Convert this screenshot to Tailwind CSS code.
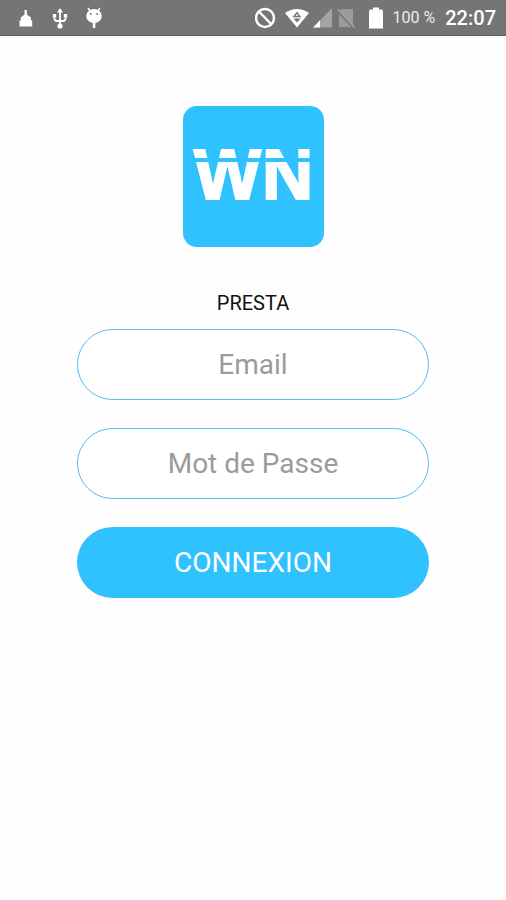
<!DOCTYPE html>
<html lang="fr">
<head>
<meta charset="utf-8">
<meta name="viewport" content="width=device-width, initial-scale=1">
<title>Presta – Connexion</title>
<script src="https://cdn.jsdelivr.net/npm/@tailwindcss/browser@4"></script>
</head>
<body class="min-h-screen bg-[#fefefe] font-['Roboto',sans-serif]">
<header class="flex h-9 items-center justify-between border-b border-[#5c5c5c] bg-[#757575] pr-[10px] pl-[18px] text-white">
  <div class="flex items-center gap-[18px]">
    <svg class="h-6 w-4" viewBox="0 0 16 24" fill="#fff" aria-hidden="true"><path d="M6.500 4h2.400v4.500l4 3v3h1.300v6H1.500v-6h1.300v-3l3.700-3z"/></svg>
    <svg class="h-6 w-4" viewBox="0 0 16 24" fill="none" stroke="#fff" stroke-width="1.800" aria-hidden="true"><path d="M8 6v14M2.500 9v3.500Q2.500 15 5 15h6q2.500 0 2.500-2.500V9"/><path fill="#fff" stroke="none" d="m8 2 3 4.500H5zM.8 8h3.400v3.400H.8zM11.800 8h3.400v3.400h-3.400z"/><circle cx="8" cy="20" r="2.600" fill="#fff" stroke="none"/></svg>
    <svg class="h-6 w-4" viewBox="0 0 16 24" aria-hidden="true"><path fill="none" stroke="#fff" stroke-width="1.500" d="m2 2 3 4m9-4-3 4"/><ellipse cx="8" cy="10" rx="7.800" ry="7" fill="#fff"/><path fill="#fff" d="M6.800 16h2.600v5.500q-1.300 1.500-2.600 0z"/><circle cx="4.800" cy="8" r="1" fill="#757575"/><circle cx="11.200" cy="8" r="1" fill="#757575"/></svg>
  </div>
  <div class="flex items-center">
    <svg class="h-6 w-[22px]" viewBox="0 0 22 24" fill="none" stroke="#fff" stroke-width="2.400" aria-hidden="true"><circle cx="10" cy="12" r="9"/><path d="m4 5.500 12.500 13"/></svg>
    <svg class="ml-2 h-6 w-6" viewBox="0 0 24 24" aria-hidden="true"><path fill="#fff" d="M0 7Q12-1 24 7L12 21.500z"/><path fill="none" stroke="#757575" stroke-width="1.300" d="m9 10.500 3-4 3 4z"/><path fill="#757575" d="M8.500 12.500h7l-3.500 4z"/></svg>
    <svg class="ml-1 h-6 w-5" viewBox="0 0 20 24" aria-hidden="true"><path fill="#a3a3a3" d="M19 2v19.500H0z"/><path fill="#fff" d="M7 14.300v7.200H0z"/></svg>
    <svg class="ml-1 h-6 w-5" viewBox="0 0 20 24" aria-hidden="true"><path fill="#9b9b9b" d="M5 3h11v18H2V6z"/><path fill="none" stroke="#757575" stroke-width="2" d="m0 4.500 17 18"/><path fill="none" stroke="#a3a3a3" stroke-width="1.800" d="m1 3 16.500 18.500"/></svg>
    <svg class="ml-3 h-6 w-4" viewBox="0 0 16 24" fill="#fff" aria-hidden="true"><path d="M4 1.500h6v2h3l1 1.500v17.500H0V5l1-1.500h3z"/></svg>
    <span class="ml-2 text-base leading-6 whitespace-nowrap text-[#ececec]">100 %</span>
    <time class="ml-[10px] text-xl leading-6 font-medium">22:07</time>
  </div>
</header>
<main class="flex flex-col items-center px-[77px] pt-[70px]">
  <svg class="size-[141px]" viewBox="0 0 141 141" role="img" aria-label="WN">
    <rect width="141" height="141" rx="14" fill="#30c1ff"/>
    <text x="11 79" y="93" font-size="71" fill="#fff" stroke="#fff" stroke-width="2" class="font-['Liberation_Sans',Arial,sans-serif] font-bold">WN</text>
    <path fill="#30c1ff" d="M0 52h141v4H0z"/>
  </svg>
  <form class="mt-11 flex w-full flex-col items-center">
    <h1 class="text-xl leading-6 text-[#111]">PRESTA</h1>
    <input type="email" aria-label="Email" placeholder="Email" class="mt-[14px] h-[71px] w-full rounded-full border border-[#4fbdf8] bg-white px-6 text-center text-[28px] text-[#333] placeholder:text-[#9b9b9b]">
    <input type="password" aria-label="Mot de Passe" placeholder="Mot de Passe" class="mt-7 h-[71px] w-full rounded-full border border-[#4fbdf8] bg-white px-6 text-center text-[28px] text-[#333] placeholder:text-[#9b9b9b]">
    <button type="submit" class="mt-7 h-[71px] w-full rounded-full bg-[#30c1ff] text-[28px] text-white">CONNEXION</button>
  </form>
</main>
</body>
</html>
